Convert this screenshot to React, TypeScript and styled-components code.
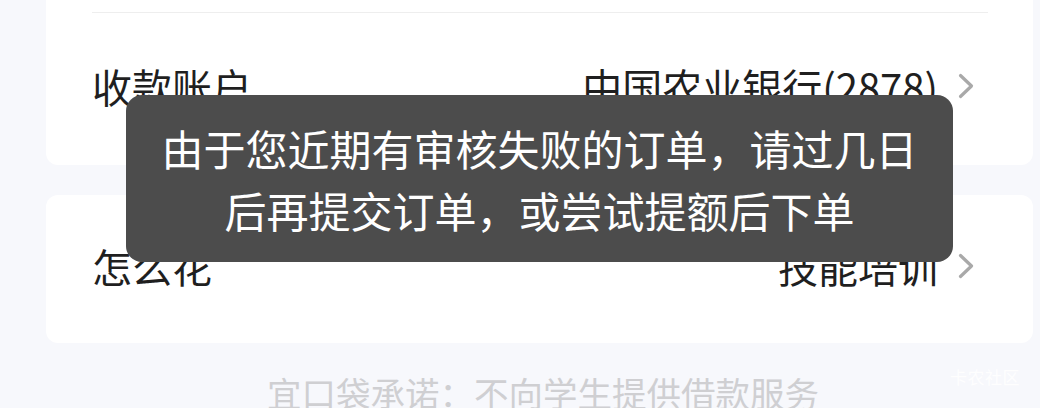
import React from "react";
import styled, { createGlobalStyle } from "styled-components";

const Global = createGlobalStyle`
  html, body {
    margin: 0;
    padding: 0;
    background: #f7f8fc;
    font-family: "Noto Sans CJK SC", "Noto Sans", sans-serif;
  }
  * { box-sizing: border-box; }
`;

const Page = styled.div`
  position: relative;
  width: 1040px;
  height: 408px;
  overflow: hidden;
  padding-left: 46px;
  background: #f7f8fc;
`;

const Column = styled.div`
  width: 987px;
  display: flex;
  flex-direction: column;
  gap: 30px;
`;

const Card = styled.div<{ $cutTop?: boolean }>`
  background: #ffffff;
  border-radius: ${(p) => (p.$cutTop ? "0 0 12px 12px" : "12px")};
  padding: ${(p) => (p.$cutTop ? "12px 0 0" : "0")};
  display: flex;
  flex-direction: column;
`;

const Divider = styled.div`
  height: 1px;
  background: #eeeeee;
  margin: 0 45px 0 46px;
`;

const Row = styled.div<{ $h: number }>`
  height: ${(p) => p.$h}px;
  display: flex;
  align-items: center;
  justify-content: space-between;
  padding: 0 46px 7px;
  font-size: 40px;
  color: #1f1f1f;
`;

const Label = styled.span`
  line-height: 1;
`;

const Value = styled.span`
  display: flex;
  align-items: center;
  gap: 20px;
  line-height: 1;
`;

const Chevron = styled.svg`
  width: 16px;
  height: 26px;
  margin-right: 13px;
  flex: none;
`;

const Footer = styled.div`
  margin-top: 25px;
  text-align: center;
  font-size: 34.5px;
  line-height: 48px;
  color: #cfcfd2;
`;

const Watermark = styled.div`
  position: absolute;
  left: 950px;
  top: 364px;
  font-size: 17px;
  letter-spacing: 0.5px;
  color: rgba(255, 255, 255, 0.9);
`;

const Toast = styled.div`
  position: absolute;
  left: 126px;
  top: 95px;
  width: 827px;
  height: 167px;
  border-radius: 16px;
  background: #4c4c4c;
  color: #ffffff;
  font-size: 42px;
  line-height: 62px;
  display: flex;
  flex-direction: column;
  align-items: center;
  justify-content: center;
  text-align: center;
`;

const ToastLine = styled.span`
  display: block;
  white-space: nowrap;
`;

const Arrow = () => (
  <Chevron viewBox="0 0 16 26">
    <path d="M2.5 2.5 L13.5 13 L2.5 23.5" fill="none" stroke="#a9a9a9" strokeWidth="3.2" strokeLinecap="round" strokeLinejoin="round" />
  </Chevron>
);

export default function App() {
  return (
    <>
      <Global />
      <Page>
        <Column>
          <Card $cutTop>
            <Divider />
            <Row $h={152}>
              <Label>收款账户</Label>
              <Value>
                中国农业银行(2878)
                <Arrow />
              </Value>
            </Row>
          </Card>
          <Card>
            <Row $h={148}>
              <Label>怎么花</Label>
              <Value>
                技能培训
                <Arrow />
              </Value>
            </Row>
          </Card>
        </Column>
        <Footer>宜口袋承诺：不向学生提供借款服务</Footer>
        <Watermark>卡农社区</Watermark>
        <Toast>
          <ToastLine>由于您近期有审核失败的订单，请过几日</ToastLine>
          <ToastLine>后再提交订单，或尝试提额后下单</ToastLine>
        </Toast>
      </Page>
    </>
  );
}
